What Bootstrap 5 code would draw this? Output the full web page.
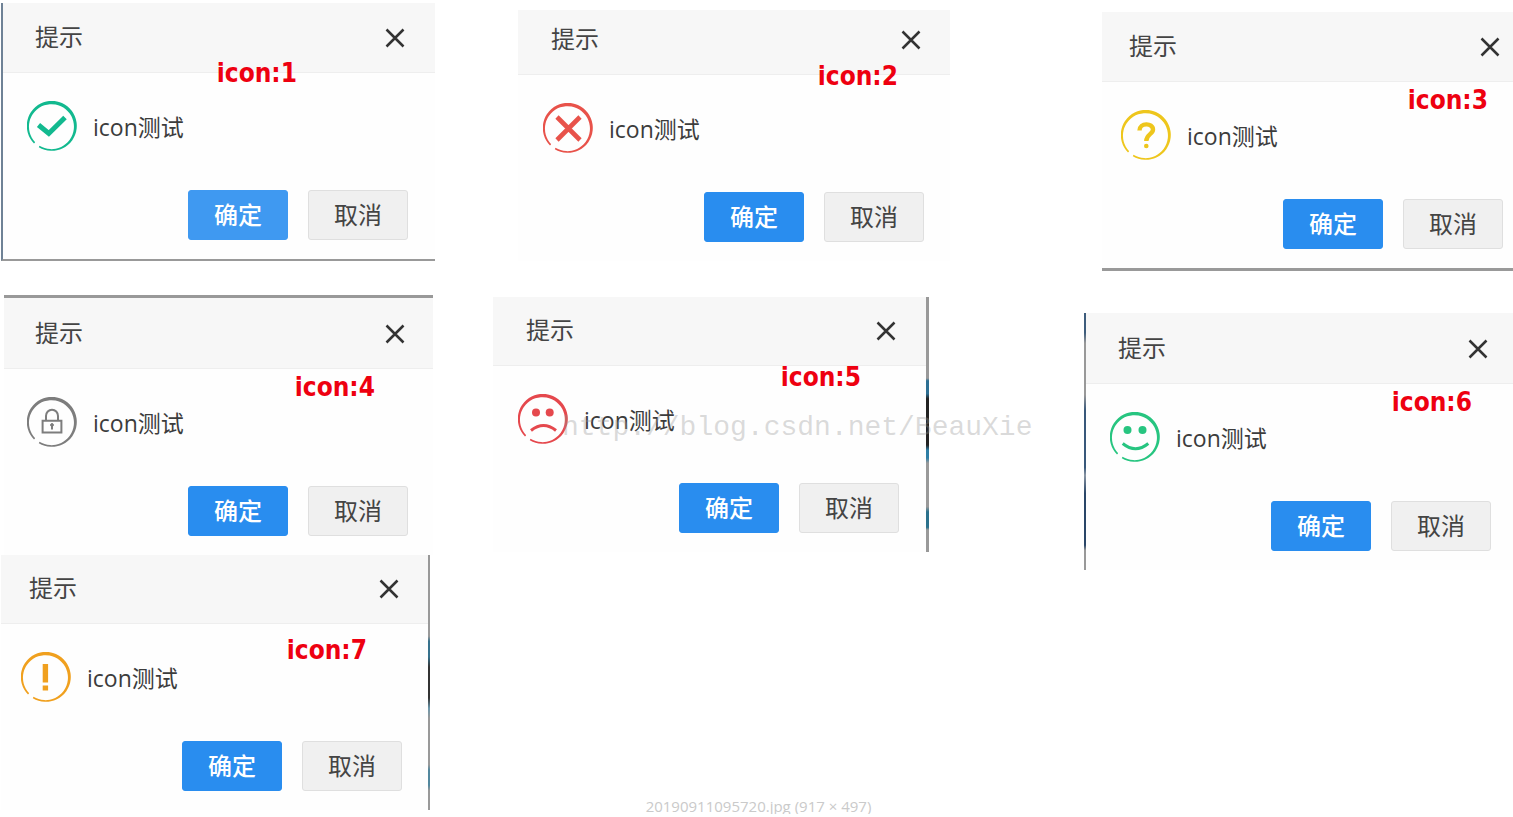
<!DOCTYPE html>
<html lang="zh-CN">
<head>
<meta charset="utf-8">
<meta name="viewport" content="width=device-width, initial-scale=1">
<title>提示 icon测试</title>
<link rel="stylesheet" href="https://cdn.jsdelivr.net/npm/bootstrap@5.3.0/dist/css/bootstrap.min.css">
<style>
  body { background: #fff; color: #444; font-family: "Open Sans", "Noto Sans CJK SC", sans-serif; }
  .gallery { display: grid; grid-template-columns: 435fr 58fr 457fr 134fr 429fr; overflow: hidden; }
  .stack { grid-row: 1; }
  .stack-a { grid-column: 1; padding: 3px 0 4px; }
  .stack-b { grid-column: 3; padding-top: 10px; }
  .stack-c { grid-column: 5; padding-top: 12px; }

  /* dialog: --start / --end are the side insets of its content, --head the title bar height */
  .dlg { --start: 25px; --end: 27px; --head: 70px; --tag-end: 60px; --tag-top: 3px; background: #fefefe; }
  .dlg-head { height: var(--head); padding: 0 calc(var(--end) + 3px) 22px calc(var(--start) + 8px); background: #f7f7f7; border-bottom: 1px solid #eee; }
  .dlg-title { font-size: 24px; line-height: 26px; font-weight: 400; }
  .dlg-close { width: 20px; height: 24px; border: 0; background: none; color: #333; }
  .dlg-body { padding: 28px var(--end) 19px var(--start); }
  .dlg-icon { width: 50px; height: 50px; flex: none; }
  .dlg-text { font-size: 23px; line-height: 52px; height: 50px; padding-left: 16px; color: #3c3c3c; }
  .dlg-actions { margin-top: 39px; gap: 20px; }
  .dlg .btn { width: 100px; height: 50px; padding: 0; font-size: 24px; line-height: 48px; border-radius: 3px; }
  .btn-ok { --bs-btn-color: #fff; --bs-btn-bg: #298def; --bs-btn-border-color: #298def; --bs-btn-hover-color: #fff; --bs-btn-hover-bg: #3f99f1; font-weight: 500; }
  .btn-ok.hovered { --bs-btn-bg: #3f99f1; --bs-btn-border-color: #3f99f1; }
  .btn-no { --bs-btn-color: #444; --bs-btn-bg: #f0f0f0; --bs-btn-border-color: #dfdfdf; --bs-btn-hover-bg: #e8e8e8; }
  .tag { position: absolute; right: var(--tag-end); top: var(--tag-top); font: 700 26px/30px "DejaVu Sans Condensed", "Noto Sans", sans-serif; color: #ee0010; }

  .dlg-1 { --start: 24px; --end: 27px; --tag-end: 138px; --tag-top: -15px; margin-left: 1px; border-left: 2px solid #6f8296; border-bottom: 2px solid #999; }
  .dlg-2 { --end: 26px; --head: 65px; --tag-end: 52px; --tag-top: -14px; margin-left: 25px; }
  .dlg-3 { --start: 19px; --end: 10px; --tag-end: 25px; margin-left: 18px; border-bottom: 3px solid #999; }
  .dlg-4 { --start: 23px; --end: 25px; --head: 71px; --tag-end: 58px; margin: 34px 2px 0 4px; border-top: 3px solid #999; }
  .dlg-5 { --head: 69px; --tag-end: 65px; --tag-top: -4px; margin: 36px 21px 0 0; border-right: 3px solid; border-image: linear-gradient(#999 32%, #2d6f93 33% 38%, #222 40% 58%, #2e7ea5 60% 63%, #999 65% 82%, #2b718c 84% 90%, #999 91%) 1; border-image-width: 0 3px 0 0; }
  .dlg-6 { --start: 24px; --end: 22px; --head: 71px; --tag-end: 41px; margin-top: 42px; border-left: 2px solid; border-image: linear-gradient(#3d5c7c 8%, #999 12% 32%, #38587a 38% 60%, #8995a3 63%, #2a4668 70% 90%, #999 92%) 1; border-image-width: 0 0 0 2px; }
  .dlg-7 { --start: 20px; --end: 26px; --head: 69px; --tag-end: 61px; --tag-top: 11px; margin: 0 5px 0 1px; border-right: 2px solid; border-image: linear-gradient(#999 32%, #37728d 34% 40%, #333 44% 56%, #6b97ab 60%, #999 64% 82%, #53889e 84% 90%, #999 92%) 1; border-image-width: 0 2px 0 0; }

  .watermark { position: absolute; left: 69px; top: 44px; font: 28px/36px "Liberation Mono", monospace; color: rgba(150, 150, 150, .35); white-space: nowrap; pointer-events: none; }
  .file-note { grid-row: 1; grid-column: 1 / -1; align-self: end; height: 18px; overflow: hidden; padding-left: 4px; font-size: 15px; line-height: 20px; color: #cacaca; pointer-events: none; }
  @media (max-width: 1320px) {
    .gallery { display: block; max-width: 457px; }
  }
</style>
</head>
<body>
<svg class="d-none" aria-hidden="true">
  <symbol id="ring" viewBox="0 0 50 50"><path fill="currentColor" d="M7 42.400A25 25 0 1 1 11.800 46.200L12.500 44.700A22.500 22.500 0 1 0 8.200 41.200Z"/></symbol>
  <symbol id="cross" viewBox="0 0 20 20"><path d="M1.500 1.500l17 17M18.500 1.500l-17 17" stroke="currentColor" stroke-width="2.500"/></symbol>
</svg>

<main class="gallery">
  <div class="stack stack-a">
    <section class="dlg dlg-1">
      <header class="dlg-head d-flex justify-content-between align-items-end">
        <h2 class="dlg-title m-0">提示</h2>
        <button type="button" class="dlg-close p-0 d-flex align-items-center" aria-label="关闭"><svg width="20" height="20"><use href="#cross"/></svg></button>
      </header>
      <div class="dlg-body position-relative">
        <span class="tag">icon:1</span>
        <div class="d-flex">
          <svg class="dlg-icon" viewBox="0 0 50 50" color="#12b98f" fill="none" stroke="currentColor"><use href="#ring" stroke="none"/><path stroke-width="5" d="M11.5 24L21.8 32.5 38 16.5"/></svg>
          <div class="dlg-text">icon测试</div>
        </div>
        <div class="dlg-actions d-flex justify-content-end">
          <button type="button" class="btn btn-ok hovered">确定</button>
          <button type="button" class="btn btn-no">取消</button>
        </div>
      </div>
    </section>

    <section class="dlg dlg-4">
      <header class="dlg-head d-flex justify-content-between align-items-end">
        <h2 class="dlg-title m-0">提示</h2>
        <button type="button" class="dlg-close p-0 d-flex align-items-center" aria-label="关闭"><svg width="20" height="20"><use href="#cross"/></svg></button>
      </header>
      <div class="dlg-body position-relative">
        <span class="tag">icon:4</span>
        <div class="d-flex">
          <svg class="dlg-icon" viewBox="0 0 50 50" color="#7d7d7d" fill="none" stroke="currentColor"><use href="#ring" stroke="none"/><path stroke-width="2" d="M15.6 23.8h18.8v11.6H15.6zM19 23.8V19a6 6.3 0 0 1 12 0v4.8M25 28.5v4"/><circle cx="25" cy="28" r="1.4" fill="currentColor"/></svg>
          <div class="dlg-text">icon测试</div>
        </div>
        <div class="dlg-actions d-flex justify-content-end">
          <button type="button" class="btn btn-ok">确定</button>
          <button type="button" class="btn btn-no">取消</button>
        </div>
      </div>
    </section>

    <section class="dlg dlg-7">
      <header class="dlg-head d-flex justify-content-between align-items-end">
        <h2 class="dlg-title m-0">提示</h2>
        <button type="button" class="dlg-close p-0 d-flex align-items-center" aria-label="关闭"><svg width="20" height="20"><use href="#cross"/></svg></button>
      </header>
      <div class="dlg-body position-relative">
        <span class="tag">icon:7</span>
        <div class="d-flex">
          <svg class="dlg-icon" viewBox="0 0 50 50" color="#f0a01e" fill="none" stroke="currentColor"><use href="#ring" stroke="none"/><path stroke-width="5.4" d="M24.4 12v18.5M24.4 33.5v5"/></svg>
          <div class="dlg-text">icon测试</div>
        </div>
        <div class="dlg-actions d-flex justify-content-end">
          <button type="button" class="btn btn-ok">确定</button>
          <button type="button" class="btn btn-no">取消</button>
        </div>
      </div>
    </section>
  </div>

  <div class="stack stack-b">
    <section class="dlg dlg-2">
      <header class="dlg-head d-flex justify-content-between align-items-end">
        <h2 class="dlg-title m-0">提示</h2>
        <button type="button" class="dlg-close p-0 d-flex align-items-center" aria-label="关闭"><svg width="20" height="20"><use href="#cross"/></svg></button>
      </header>
      <div class="dlg-body position-relative">
        <span class="tag">icon:2</span>
        <div class="d-flex">
          <svg class="dlg-icon" viewBox="0 0 50 50" color="#e8524a" fill="none" stroke="currentColor"><use href="#ring" stroke="none"/><path stroke-width="4.6" d="M14 14L37 37M37 14L14 37"/></svg>
          <div class="dlg-text">icon测试</div>
        </div>
        <div class="dlg-actions d-flex justify-content-end">
          <button type="button" class="btn btn-ok">确定</button>
          <button type="button" class="btn btn-no">取消</button>
        </div>
      </div>
    </section>

    <section class="dlg dlg-5">
      <header class="dlg-head d-flex justify-content-between align-items-end">
        <h2 class="dlg-title m-0">提示</h2>
        <button type="button" class="dlg-close p-0 d-flex align-items-center" aria-label="关闭"><svg width="20" height="20"><use href="#cross"/></svg></button>
      </header>
      <div class="dlg-body position-relative">
        <span class="tag">icon:5</span>
        <div class="d-flex">
          <svg class="dlg-icon" viewBox="0 0 50 50" color="#e5484d" fill="none" stroke="currentColor"><use href="#ring" stroke="none"/><path stroke-width="3" d="M13 36.5Q25.5 26.5 38 36.5"/><g fill="currentColor" stroke="none"><circle cx="18" cy="18.5" r="4"/><circle cx="31.7" cy="18.5" r="4"/></g></svg>
          <div class="dlg-text">icon测试</div>
        </div>
        <div class="dlg-actions d-flex justify-content-end">
          <button type="button" class="btn btn-ok">确定</button>
          <button type="button" class="btn btn-no">取消</button>
        </div>
        <span class="watermark">http://blog.csdn.net/BeauXie</span>
      </div>
    </section>
  </div>

  <div class="stack stack-c">
    <section class="dlg dlg-3">
      <header class="dlg-head d-flex justify-content-between align-items-end">
        <h2 class="dlg-title m-0">提示</h2>
        <button type="button" class="dlg-close p-0 d-flex align-items-center" aria-label="关闭"><svg width="20" height="20"><use href="#cross"/></svg></button>
      </header>
      <div class="dlg-body position-relative">
        <span class="tag">icon:3</span>
        <div class="d-flex">
          <svg class="dlg-icon" viewBox="0 0 50 50" color="#eec61c" fill="none" stroke="currentColor"><use href="#ring" stroke="none"/><path stroke-width="4.4" d="M18.5 20.5C18.5 12.5 32 12.5 32 19.5 32 24.5 25.3 24 25.3 31"/><circle cx="25.3" cy="36" r="2.3" fill="currentColor" stroke="none"/></svg>
          <div class="dlg-text">icon测试</div>
        </div>
        <div class="dlg-actions d-flex justify-content-end">
          <button type="button" class="btn btn-ok">确定</button>
          <button type="button" class="btn btn-no">取消</button>
        </div>
      </div>
    </section>

    <section class="dlg dlg-6">
      <header class="dlg-head d-flex justify-content-between align-items-end">
        <h2 class="dlg-title m-0">提示</h2>
        <button type="button" class="dlg-close p-0 d-flex align-items-center" aria-label="关闭"><svg width="20" height="20"><use href="#cross"/></svg></button>
      </header>
      <div class="dlg-body position-relative">
        <span class="tag">icon:6</span>
        <div class="d-flex">
          <svg class="dlg-icon" viewBox="0 0 50 50" color="#27c580" fill="none" stroke="currentColor"><use href="#ring" stroke="none"/><path stroke-width="3" d="M12.7 31.5Q25.5 42 38.3 31.5"/><g fill="currentColor" stroke="none"><circle cx="17.5" cy="18" r="4"/><circle cx="32.5" cy="18" r="4"/></g></svg>
          <div class="dlg-text">icon测试</div>
        </div>
        <div class="dlg-actions d-flex justify-content-end">
          <button type="button" class="btn btn-ok">确定</button>
          <button type="button" class="btn btn-no">取消</button>
        </div>
      </div>
    </section>
  </div>

  <div class="file-note text-center">20190911095720.jpg (917 × 497)</div>
</main>
<script src="https://cdn.jsdelivr.net/npm/bootstrap@5.3.0/dist/js/bootstrap.bundle.min.js"></script>
</body>
</html>
